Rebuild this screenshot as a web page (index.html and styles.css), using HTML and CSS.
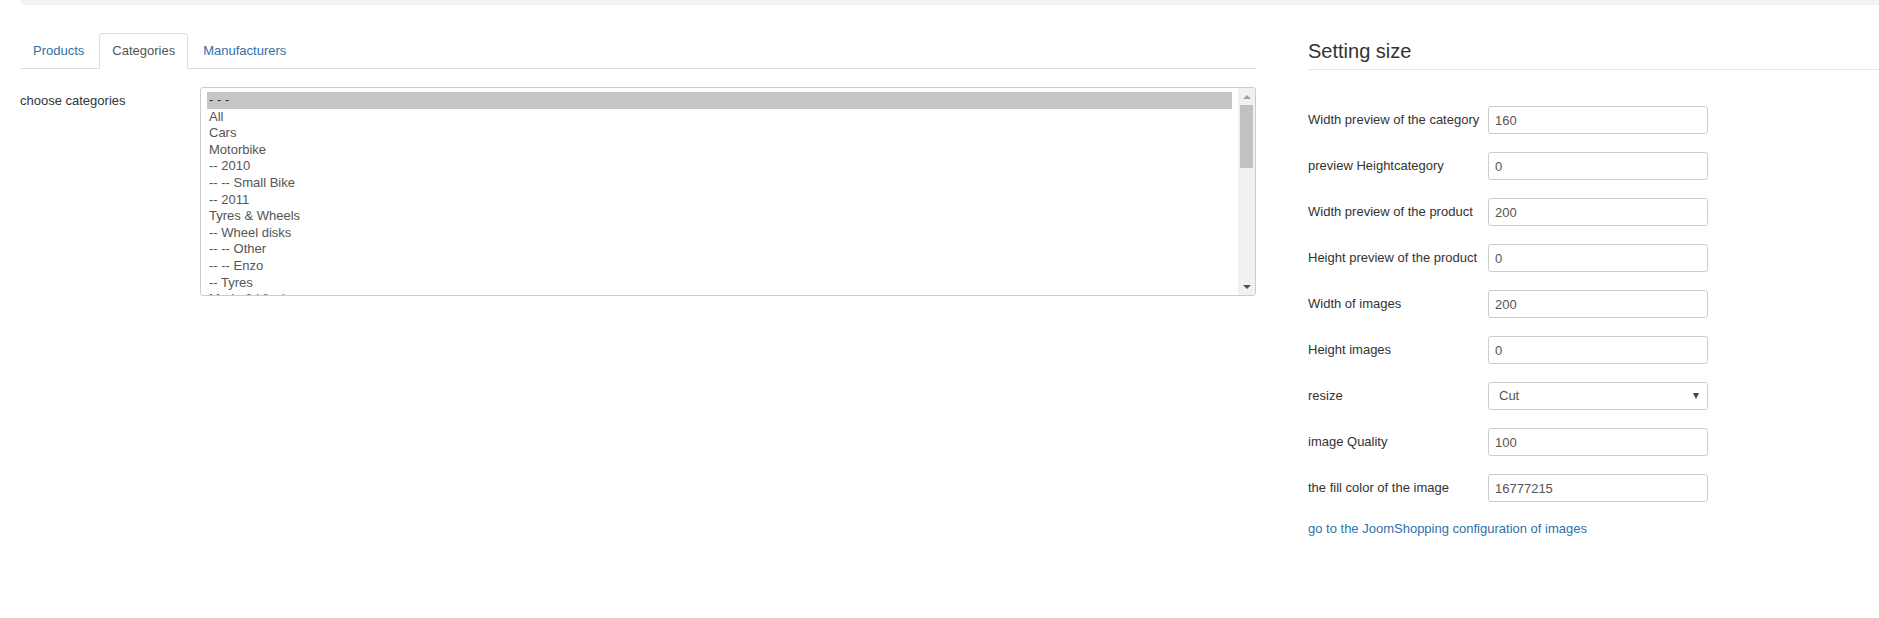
FILE: index.html
```html
<!DOCTYPE html>
<html lang="en">
<head>
<meta charset="utf-8">
<title>Setting size</title>
<link rel="stylesheet" href="styles.css">
</head>
<body>
<div class="topbar"></div>
<div class="page">
  <div class="main">
    <ul class="tabs">
      <li class="tab"><a href="#">Products</a></li>
      <li class="tab active"><a href="#">Categories</a></li>
      <li class="tab"><a href="#">Manufacturers</a></li>
    </ul>
    <div class="field">
      <label class="field-label">choose categories</label>
      <div class="listbox">
        <div class="options">
          <div class="opt selected">- - -</div>
          <div class="opt">All</div>
          <div class="opt">Cars</div>
          <div class="opt">Motorbike</div>
          <div class="opt">-- 2010</div>
          <div class="opt">-- -- Small Bike</div>
          <div class="opt">-- 2011</div>
          <div class="opt">Tyres &amp; Wheels</div>
          <div class="opt">-- Wheel disks</div>
          <div class="opt">-- -- Other</div>
          <div class="opt">-- -- Enzo</div>
          <div class="opt">-- Tyres</div>
          <div class="opt">Mods &amp; Vinyls</div>
        </div>
        <div class="scrollbar">
          <span class="arrow up"></span>
          <span class="thumb"></span>
          <span class="track"></span>
          <span class="arrow down"></span>
        </div>
      </div>
    </div>
  </div>
  <div class="side">
    <h2 class="legend">Setting size</h2>
    <div class="row"><label class="row-label">Width preview of the category</label><input class="input" type="text" value="160"></div>
    <div class="row"><label class="row-label">preview Heightcategory</label><input class="input" type="text" value="0"></div>
    <div class="row"><label class="row-label">Width preview of the product</label><input class="input" type="text" value="200"></div>
    <div class="row"><label class="row-label">Height preview of the product</label><input class="input" type="text" value="0"></div>
    <div class="row"><label class="row-label">Width of images</label><input class="input" type="text" value="200"></div>
    <div class="row"><label class="row-label">Height images</label><input class="input" type="text" value="0"></div>
    <div class="row"><label class="row-label">resize</label><div class="select"><span>Cut</span><span class="caret"></span></div></div>
    <div class="row"><label class="row-label">image Quality</label><input class="input" type="text" value="100"></div>
    <div class="row"><label class="row-label">the fill color of the image</label><input class="input" type="text" value="16777215"></div>
    <a class="link" href="#">go to the JoomShopping configuration of images</a>
  </div>
</div>
</body>
</html>
```
FILE: styles.css
```css
html, body {
  margin: 0;
  padding: 0;
  background: #fff;
}
body {
  font-family: "Liberation Sans", Arial, sans-serif;
  font-size: 13px;
  line-height: 18px;
  color: #333;
}
.topbar {
  margin-left: 20px;
  height: 5px;
  background: #f3f3f3;
  border-bottom-left-radius: 8px;
}
.page {
  display: grid;
  grid-template-columns: 1236px 1fr;
  column-gap: 52px;
  padding-left: 20px;
  margin-top: 28px;
}
.tabs {
  display: flex;
  list-style: none;
  margin: 0;
  padding: 0;
  border-bottom: 1px solid #ddd;
}
.tab {
  margin-right: 2px;
  margin-bottom: -1px;
}
.tab a {
  display: block;
  padding: 8px 12px;
  line-height: 18px;
  border: 1px solid transparent;
  border-radius: 4px 4px 0 0;
  color: #3071a9;
  text-decoration: none;
}
.tab.active a {
  border-color: #ddd #ddd transparent;
  background: #fff;
  color: #555;
}
.field {
  display: flex;
  margin-top: 18px;
}
.field-label {
  width: 160px;
  margin-right: 20px;
  padding-top: 5px;
  flex: none;
}
.listbox {
  flex: 1;
  height: 209px;
  box-sizing: border-box;
  border: 1px solid #ccc;
  border-radius: 3px;
  display: flex;
  overflow: hidden;
}
.options {
  flex: 1;
  padding: 4px 6px;
  overflow: hidden;
}
.opt {
  height: 16.6px;
  line-height: 16px;
  padding: 0 2px;
  color: #555;
  white-space: nowrap;
}
.opt.selected {
  background: #c6c6c6;
  color: #333;
}
.scrollbar {
  width: 17px;
  flex: none;
  background: #f1f1f1;
  display: flex;
  flex-direction: column;
}
.arrow {
  height: 17px;
  flex: none;
  display: flex;
  align-items: center;
  justify-content: center;
}
.arrow::before {
  content: "";
  width: 0;
  height: 0;
  border-left: 4px solid transparent;
  border-right: 4px solid transparent;
}
.arrow.up::before {
  border-bottom: 4px solid #a3a3a3;
}
.arrow.down::before {
  border-top: 4px solid #505050;
}
.thumb {
  height: 63px;
  margin: 0 2px;
  background: #c1c1c1;
  flex: none;
}
.track {
  flex: 1;
}
.side {
  min-width: 0;
}
.legend {
  margin: 0 0 36px;
  font-size: 20px;
  font-weight: normal;
  line-height: 36px;
  color: #333;
  border-bottom: 1px solid #e5e5e5;
}
.row {
  display: flex;
  margin-bottom: 18px;
}
.row-label {
  width: 180px;
  flex: none;
  padding-top: 5px;
  line-height: 18px;
  white-space: nowrap;
}
.input, .select {
  width: 220px;
  height: 28px;
  box-sizing: border-box;
  border: 1px solid #ccc;
  border-radius: 3px;
  padding: 4px 6px;
  font-family: "Liberation Sans", Arial, sans-serif;
  font-size: 13px;
  line-height: 18px;
  color: #555;
  background: #fff;
  margin: 0;
  outline: none;
}
.select {
  display: flex;
  align-items: center;
  justify-content: space-between;
  padding: 4px 8px 4px 10px;
}
.caret {
  width: 0;
  height: 0;
  border-left: 3.5px solid transparent;
  border-right: 3.5px solid transparent;
  border-top: 6px solid #444;
}
.link {
  display: block;
  color: #3071a9;
  text-decoration: none;
  line-height: 18px;
}
```
